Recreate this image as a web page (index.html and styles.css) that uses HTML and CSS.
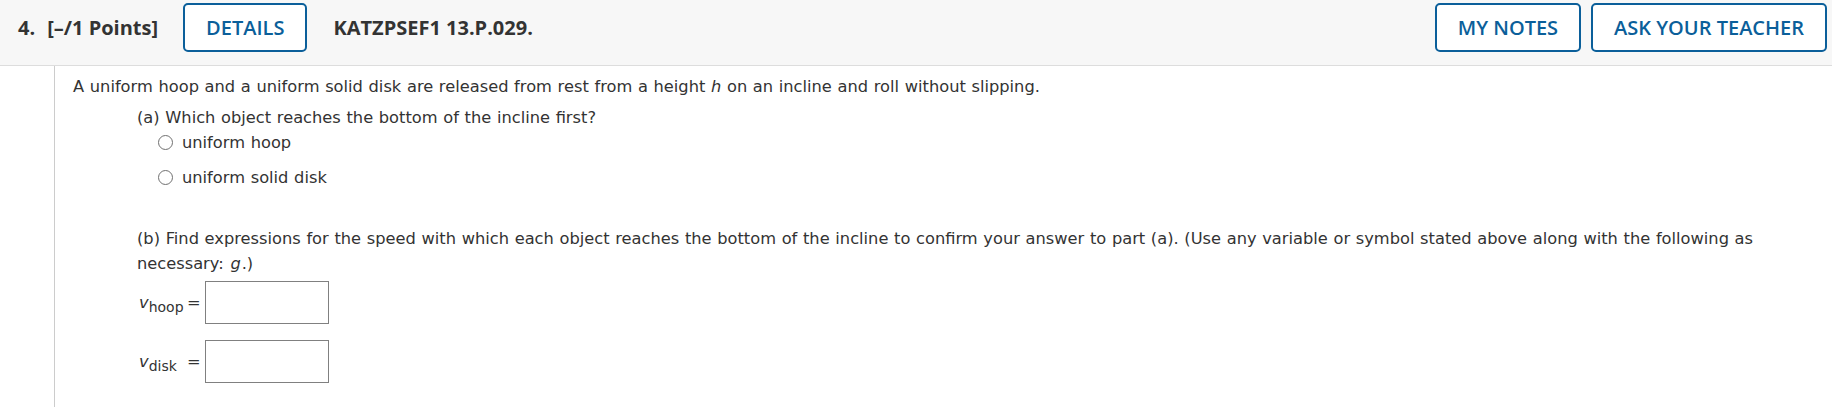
FILE: index.html
```html
<!DOCTYPE html>
<html lang="en">
<head>
<meta charset="utf-8">
<title>Question 4</title>
<link rel="stylesheet" href="styles.css">
</head>
<body>
<header class="qhead">
  <div class="qnum"><span class="num">4.</span><span class="pts">[–/1 Points]</span></div>
  <button class="btn btn-details" type="button">DETAILS</button>
  <span class="qid">KATZPSEF1 13.P.029.</span>
  <div class="spacer"></div>
  <div class="actions">
    <button class="btn" type="button">MY NOTES</button>
    <button class="btn" type="button">ASK YOUR TEACHER</button>
  </div>
</header>
<main class="qbody">
  <div class="content">
    <p class="stem">A uniform hoop and a uniform solid disk are released from rest from a height <i>h</i> on an incline and roll without slipping.</p>
    <div class="part part-a">
      <p class="prompt">(a) Which object reaches the bottom of the incline first?</p>
      <ul class="choices">
        <li class="choice"><span class="radio"></span><span>uniform hoop</span></li>
        <li class="choice"><span class="radio"></span><span>uniform solid disk</span></li>
      </ul>
    </div>
    <div class="part part-b">
      <p class="prompt"><span>(b) Find expressions for the speed with which each object reaches the bottom of the incline to confirm your answer to part (a). (Use any variable or symbol stated above along with the following as</span> <span class="nowrap">necessary: <i class="var-g">g</i>.)</span></p>
      <div class="answers">
        <span class="lbl"><i>v</i><span class="sub">hoop</span></span><span class="eq">=</span><span class="box"></span>
        <span class="lbl"><i>v</i><span class="sub">disk</span></span><span class="eq">=</span><span class="box"></span>
      </div>
    </div>
  </div>
</main>
</body>
</html>
```

FILE: styles.css
```css
html, body {
  margin: 0;
  padding: 0;
  background: #ffffff;
}

body {
  min-height: 100vh;
  display: flex;
  flex-direction: column;
  font-family: "DejaVu Sans", Verdana, sans-serif;
  color: #333333;
}

.qhead {
  display: flex;
  align-items: center;
  height: 49px;
  padding: 3px 5px 13px 18px;
  background: #f7f7f7;
  border-bottom: 1px solid #dddddd;
  font-family: "Open Sans", sans-serif;
  font-size: 20px;
  color: #333333;
}

.qnum {
  font-weight: 700;
  white-space: nowrap;
}

.qnum .pts {
  margin-left: 12px;
}

.btn {
  box-sizing: border-box;
  height: 49px;
  margin: 0;
  padding: 0 21px;
  background: #ffffff;
  border: 2px solid #0b5f9a;
  border-radius: 5px;
  font-family: "Open Sans", sans-serif;
  font-size: 20px;
  font-weight: 600;
  line-height: 27px;
  color: #0b5f9a;
  white-space: nowrap;
  cursor: pointer;
}

.btn-details {
  margin-left: 25px;
}

.qid {
  margin-left: 26px;
  font-weight: 700;
  white-space: nowrap;
}

.spacer {
  flex: 1;
}

.actions {
  display: flex;
  gap: 10px;
}

.qbody {
  flex: 1;
  margin-left: 54px;
  border-left: 1px solid #cccccc;
}

.content {
  padding: 8px 42px 0 18px;
  font-size: 16.25px;
  line-height: 25px;
}

.content p {
  margin: 0;
}

.stem {
  word-spacing: 0.5px;
}

.part {
  margin-left: 64px;
  word-spacing: 0.5px;
}

.part-a {
  margin-top: 6px;
}

.choices {
  list-style: none;
  margin: 0 0 0 21px;
  padding: 0;
}

.choice {
  display: flex;
  align-items: center;
  height: 25px;
}

.choice + .choice {
  margin-top: 10px;
}

.radio {
  box-sizing: border-box;
  width: 15px;
  height: 15px;
  margin-right: 9px;
  border: 1px solid #707070;
  border-radius: 50%;
  background: #ffffff;
}

.part-b {
  margin-top: 36px;
}

.nowrap {
  white-space: nowrap;
}

.var-g {
  margin: 0 1px 0 1px;
}

.answers {
  display: grid;
  grid-template-columns: 48px 18px 124px;
  grid-auto-rows: 43px;
  row-gap: 16px;
  align-items: center;
  margin-top: 5px;
  padding-left: 2px;
}

.lbl {
  white-space: nowrap;
  line-height: 25px;
}

.lbl .sub {
  position: relative;
  top: 4.5px;
  font-size: 14px;
}

.eq {
  line-height: 25px;
}

.box {
  box-sizing: border-box;
  height: 43px;
  border: 1px solid #808080;
  background: #ffffff;
}
```
